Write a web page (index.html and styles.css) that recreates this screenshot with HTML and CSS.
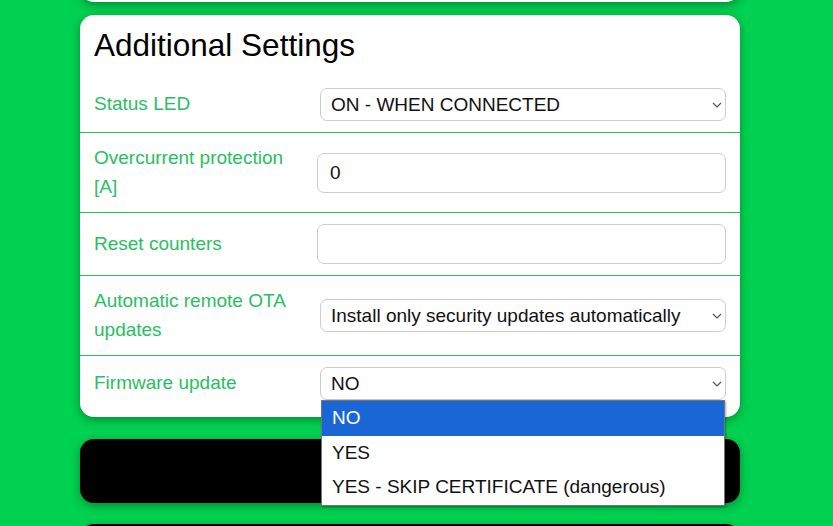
FILE: index.html
```html
<!DOCTYPE html>
<html lang="en">
<head>
<meta charset="utf-8">
<title>Settings</title>
<link rel="stylesheet" href="styles.css">
</head>
<body>
<main class="page">
  <section class="card card-prev"></section>

  <section class="card settings">
    <h2 class="card-title">Additional Settings</h2>

    <div class="row">
      <label class="row-label">Status LED</label>
      <div class="field field-select">
        <select class="control select">
          <option>ON - WHEN CONNECTED</option>
        </select>
        <svg class="chevron" viewBox="0 0 10 6" width="10" height="6"><path d="M1 1l4 4 4-4" fill="none" stroke="#555" stroke-width="1.2"/></svg>
      </div>
    </div>

    <div class="row">
      <label class="row-label">Overcurrent protection [A]</label>
      <div class="field">
        <input class="control input" type="text" value="0">
      </div>
    </div>

    <div class="row">
      <label class="row-label">Reset counters</label>
      <div class="field">
        <input class="control input" type="text" value="">
      </div>
    </div>

    <div class="row">
      <label class="row-label">Automatic remote OTA updates</label>
      <div class="field field-select">
        <select class="control select">
          <option>Install only security updates automatically</option>
        </select>
        <svg class="chevron" viewBox="0 0 10 6" width="10" height="6"><path d="M1 1l4 4 4-4" fill="none" stroke="#555" stroke-width="1.2"/></svg>
      </div>
    </div>

    <div class="row row-last">
      <label class="row-label">Firmware update</label>
      <div class="field field-select">
        <select class="control select">
          <option>NO</option>
        </select>
        <svg class="chevron" viewBox="0 0 10 6" width="10" height="6"><path d="M1 1l4 4 4-4" fill="none" stroke="#555" stroke-width="1.2"/></svg>
        <ul class="dropdown">
          <li class="option selected">NO</li>
          <li class="option">YES</li>
          <li class="option">YES - SKIP CERTIFICATE (dangerous)</li>
        </ul>
      </div>
    </div>
  </section>

  <section class="card card-dark"></section>
  <section class="card card-dark card-next"></section>
</main>
</body>
</html>
```

FILE: styles.css
```css
html, body {
  margin: 0;
  padding: 0;
  height: 100%;
  overflow: hidden;
}

body {
  background: #00d150;
  font-family: "Liberation Sans", Arial, sans-serif;
  color: #111;
}

.page {
  width: 660px;
  margin: 0 auto 0 80px;
  display: flex;
  flex-direction: column;
}

.card {
  background: #fff;
  border-radius: 14px;
  box-shadow: 0 3px 10px rgba(0, 60, 20, 0.45);
}

.card-prev {
  height: 40px;
  margin-top: -38px;
  margin-bottom: 13px;
}

.settings {
  padding-bottom: 6px;
  margin-bottom: 22px;
}

.card-title {
  margin: 0;
  padding: 12px 14px 14px;
  font-size: 31.5px;
  font-weight: normal;
  line-height: 36px;
  color: #000;
}

.row {
  display: flex;
  align-items: center;
  padding: 11px 14px;
  border-bottom: 1px solid #2fb866;
}

.row-last {
  border-bottom: none;
}

.row-label {
  width: 210px;
  flex: none;
  margin-right: 13px;
  font-size: 19px;
  line-height: 28.5px;
  color: #27c060;
}

.field {
  flex: 1;
  position: relative;
}

.control {
  box-sizing: border-box;
  width: 100%;
  font-family: "Liberation Sans", Arial, sans-serif;
  font-size: 19px;
  color: #111;
  background: #fff;
  border: 1px solid #cdcdcd;
  border-radius: 7px;
  margin: 0;
}

.input {
  height: 40px;
  padding: 0 12px;
}

.field-select {
  padding-left: 3px;
}

.select {
  height: 33px;
  padding: 0 26px 0 10px;
  appearance: none;
  -webkit-appearance: none;
}

.chevron {
  position: absolute;
  right: 4px;
  top: 14px;
}

.dropdown {
  position: absolute;
  left: 4px;
  right: 1px;
  top: 33px;
  margin: 0;
  padding: 0;
  list-style: none;
  background: #fff;
  border: 1px solid #767676;
  box-shadow: 1px 1px 2px rgba(0, 0, 0, 0.35);
  z-index: 10;
}

.option {
  height: 34.5px;
  line-height: 34px;
  padding: 0 10px;
  font-size: 19px;
  color: #111;
  white-space: nowrap;
}

.option.selected {
  background: #1a66d6;
  color: #fff;
}

.card-dark {
  background: #000;
  height: 64px;
  margin-bottom: 21px;
}

.card-next {
  height: 60px;
}
```
